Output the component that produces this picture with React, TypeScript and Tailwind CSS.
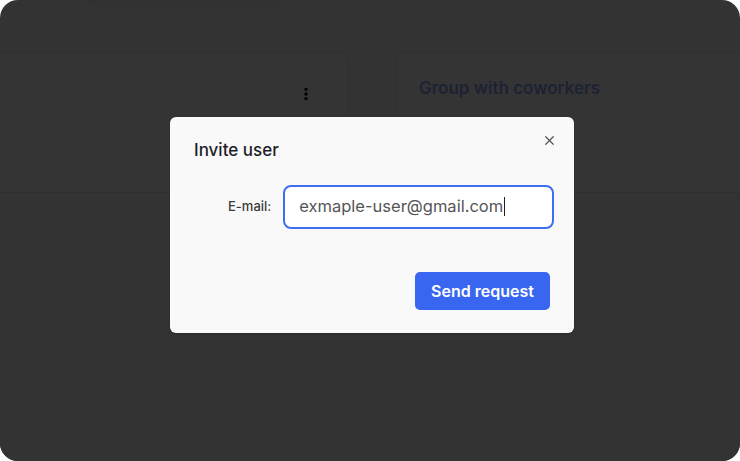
import { X, MoreVertical } from "lucide-react";

export default function App() {
  return (
    <div className="w-[740px] h-[461px] bg-white" style={{ fontFamily: "Inter, 'Open Sans', sans-serif" }}>
      <div className="relative w-full h-full rounded-[18px] overflow-hidden bg-[#333333]">
        {/* background page, dimmed */}
        <div className="flex flex-col h-full">
          <div className="h-[5px] flex pl-[88px]">
            <div className="w-[198px] h-full rounded-bl-[6px] bg-[#323232] border-b border-l border-[#303030]" />
          </div>
          <div className="h-[47px]" />
          <div className="flex h-[141px] border-b border-[#2f2f2f]">
            <div className="w-[365px] -ml-4 rounded-tr-[10px] bg-[#343434] border-r border-t border-[#303030] flex justify-end pr-[34px] pt-[33px]">
              <MoreVertical className="w-4 h-4 text-black" strokeWidth={3} />
            </div>
            <div className="w-[47px]" />
            <div className="flex-1 rounded-tl-[10px] bg-[#343434] border-l border-t border-[#303030] pl-[22px] pt-[23px]">
              <div className="text-[17px] font-semibold text-[#1c2233]">Group with coworkers</div>
            </div>
          </div>
          <div className="flex-1 bg-[#333333]" />
        </div>

        {/* modal */}
        <div className="absolute left-[170px] top-[117px] w-[404px] h-[216px] rounded-[6px] bg-[#f9f9fa] shadow">
          <button className="absolute right-[17px] top-[16px] text-[#555]">
            <X className="w-[15px] h-[15px]" strokeWidth={2} />
          </button>
          <div className="pl-6 pt-[21px] text-[17px] font-medium text-[#1e1e28]">Invite user</div>
          <div className="flex items-center mt-[21px] pl-[58px]">
            <label className="text-[13px] font-medium text-[#3a3a3a] mr-[12px]">E-mail:</label>
            <div className="w-[271px] h-[44px] rounded-[8px] border-2 border-[#3f6ef0] bg-white flex items-center pl-[14px] text-[16.5px] text-[#555]">
              exmaple-user@gmail.com
              <span className="w-px h-[19px] bg-[#222] ml-px" />
            </div>
          </div>
          <div className="flex justify-end pr-6 mt-[43px]">
            <button className="w-[135px] h-[38px] rounded-[5px] bg-[#3866f0] text-white text-[16px] font-semibold">
              Send request
            </button>
          </div>
        </div>
      </div>
    </div>
  );
}
